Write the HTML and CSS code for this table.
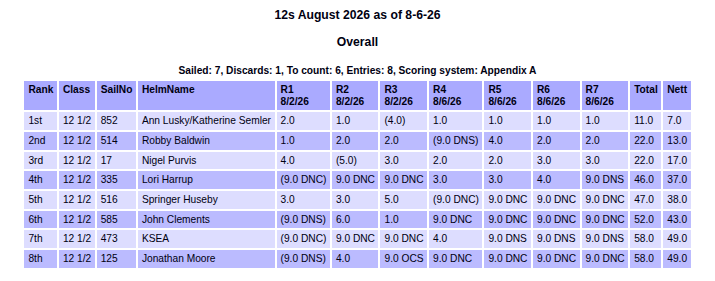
FILE: index.html
```html
<!DOCTYPE html>
<html>
<head>
<meta charset="utf-8">
<link rel="stylesheet" href="styles.css">
</head>
<body>
<div class="page">
  <h3 class="title">12s August 2026 as of 8-6-26</h3>
  <h3 class="subtitle">Overall</h3>
  <div class="summary">Sailed: 7, Discards: 1, To count: 6, Entries: 8, Scoring system: Appendix A</div>
  <table class="results">
    <thead>
      <tr>
        <th>Rank</th><th>Class</th><th>SailNo</th><th>HelmName</th>
        <th>R1<br>8/2/26</th><th>R2<br>8/2/26</th><th>R3<br>8/2/26</th>
        <th>R4<br>8/6/26</th><th>R5<br>8/6/26</th><th>R6<br>8/6/26</th><th>R7<br>8/6/26</th>
        <th>Total</th><th>Nett</th>
      </tr>
    </thead>
    <tbody>
      <tr class="odd"><td>1st</td><td>12 1/2</td><td>852</td><td>Ann Lusky/Katherine Semler</td><td>2.0</td><td>1.0</td><td>(4.0)</td><td>1.0</td><td>1.0</td><td>1.0</td><td>1.0</td><td>11.0</td><td>7.0</td></tr>
      <tr class="even"><td>2nd</td><td>12 1/2</td><td>514</td><td>Robby Baldwin</td><td>1.0</td><td>2.0</td><td>2.0</td><td>(9.0 DNS)</td><td>4.0</td><td>2.0</td><td>2.0</td><td>22.0</td><td>13.0</td></tr>
      <tr class="odd"><td>3rd</td><td>12 1/2</td><td>17</td><td>Nigel Purvis</td><td>4.0</td><td>(5.0)</td><td>3.0</td><td>2.0</td><td>2.0</td><td>3.0</td><td>3.0</td><td>22.0</td><td>17.0</td></tr>
      <tr class="even"><td>4th</td><td>12 1/2</td><td>335</td><td>Lori Harrup</td><td>(9.0 DNC)</td><td>9.0 DNC</td><td>9.0 DNC</td><td>3.0</td><td>3.0</td><td>4.0</td><td>9.0 DNS</td><td>46.0</td><td>37.0</td></tr>
      <tr class="odd"><td>5th</td><td>12 1/2</td><td>516</td><td>Springer Huseby</td><td>3.0</td><td>3.0</td><td>5.0</td><td>(9.0 DNC)</td><td>9.0 DNC</td><td>9.0 DNC</td><td>9.0 DNC</td><td>47.0</td><td>38.0</td></tr>
      <tr class="even"><td>6th</td><td>12 1/2</td><td>585</td><td>John Clements</td><td>(9.0 DNS)</td><td>6.0</td><td>1.0</td><td>9.0 DNC</td><td>9.0 DNC</td><td>9.0 DNC</td><td>9.0 DNC</td><td>52.0</td><td>43.0</td></tr>
      <tr class="odd"><td>7th</td><td>12 1/2</td><td>473</td><td>KSEA</td><td>(9.0 DNC)</td><td>9.0 DNC</td><td>9.0 DNC</td><td>4.0</td><td>9.0 DNS</td><td>9.0 DNS</td><td>9.0 DNS</td><td>58.0</td><td>49.0</td></tr>
      <tr class="even"><td>8th</td><td>12 1/2</td><td>125</td><td>Jonathan Moore</td><td>(9.0 DNS)</td><td>4.0</td><td>9.0 OCS</td><td>9.0 DNC</td><td>9.0 DNC</td><td>9.0 DNC</td><td>9.0 DNC</td><td>58.0</td><td>49.0</td></tr>
    </tbody>
  </table>
</div>
</body>
</html>
```
FILE: styles.css
```css
html, body {
  margin: 0;
  padding: 0;
  background: #ffffff;
}

.page {
  font-family: "Liberation Sans", Arial, sans-serif;
  font-size: 10.2px;
  color: #000011;
  padding-top: 7.5px;
  display: flex;
  flex-direction: column;
  align-items: center;
}

.title,
.subtitle {
  margin: 0;
  font-size: 12.2px;
  font-weight: bold;
  line-height: 14px;
  text-align: center;
}

.subtitle {
  margin-top: 13px;
}

.summary {
  margin-top: 16.3px;
  font-weight: bold;
  line-height: 11.7px;
  text-align: center;
}

.results {
  margin-top: 2.5px;
  border-collapse: separate;
  border-spacing: 2px;
  font-size: 10.2px;
}

.results th,
.results td {
  padding: 3px 3.5px 3px 4px;
  text-align: left;
  vertical-align: top;
  white-space: nowrap;
  line-height: 11.65px;
}

.results th {
  background: #aaaaff;
  font-weight: bold;
}

.results tr.odd td {
  background: #ddddff;
}

.results tr.even td {
  background: #bbbbff;
}
```
